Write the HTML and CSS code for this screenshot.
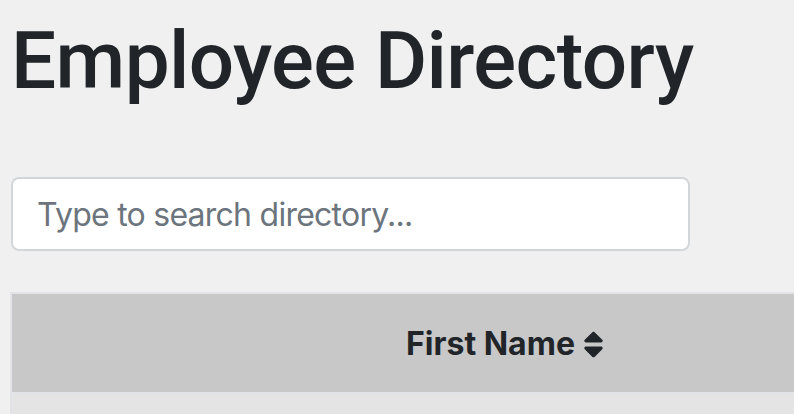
FILE: index.html
```html
<!DOCTYPE html>
<html lang="en">
<head>
<meta charset="utf-8">
<title>Employee Directory</title>
<link rel="stylesheet" href="styles.css">
</head>
<body>
<div class="page">
  <h1 class="title">Employee Directory</h1>
  <input class="search" type="text" placeholder="Type to search directory...">
  <div class="table-wrap">
    <table class="directory">
      <thead>
        <tr>
          <th class="col-image"></th>
          <th class="col-first">First Name <svg class="sort" viewBox="0 0 320 512" width="21" height="33" aria-hidden="true"><path d="M41 288h238c21.4 0 32.1 25.9 17 41L177 448c-9.4 9.4-24.6 9.4-33.9 0L24 329c-15.1-15.1-4.4-41 17-41zm255-105L177 64c-9.4-9.4-24.6-9.4-33.9 0L24 183c-15.1 15.1-4.4 41 17 41h238c21.4 0 32.1-25.9 17-41z"/></svg></th>
          <th class="col-last"></th>
        </tr>
      </thead>
      <tbody>
        <tr>
          <td></td>
          <td></td>
          <td></td>
        </tr>
      </tbody>
    </table>
  </div>
</div>
</body>
</html>
```

FILE: styles.css
```css
html, body {
  margin: 0;
  padding: 0;
  background: #f0f0f0;
  overflow: hidden;
}

body {
  font-family: Inter, "Liberation Sans", Arial, sans-serif;
  color: #212529;
}

.page {
  padding: 13px 0 0 10px;
}

.title {
  margin: 0 0 68px 1px;
  font-family: Roboto, "Liberation Sans", Arial, sans-serif;
  font-size: 80px;
  font-weight: 500;
  line-height: 96px;
  letter-spacing: -0.6px;
}

.search {
  display: block;
  box-sizing: border-box;
  width: 679px;
  height: 74px;
  margin: 0 0 41px 1px;
  padding: 0 24px;
  border: 2px solid #d3d6d9;
  border-radius: 8px;
  background: #fff;
  font-family: Inter, "Liberation Sans", Arial, sans-serif;
  font-size: 32px;
  letter-spacing: -0.75px;
  color: #495057;
  outline: none;
}

.search::placeholder {
  color: #6c757d;
  opacity: 1;
}

.table-wrap {
  width: 1200px;
}

.directory {
  border-collapse: collapse;
  width: 1200px;
  table-layout: fixed;
  border-top: 2px solid #e1e3e6;
  border-left: 2px solid #e1e3e6;
}

.directory thead th {
  height: 100px;
  padding: 0 24px;
  box-sizing: border-box;
  background: #c8c8c8;
  border-bottom: 2px solid #e1e3e6;
  font-size: 32px;
  font-weight: 700;
  text-align: left;
  vertical-align: middle;
  white-space: nowrap;
}

.col-image { width: 371px; }
.col-first { width: 400px; }

.sort {
  display: inline-block;
  vertical-align: -6px;
  fill: #212529;
}

.directory tbody td {
  height: 60px;
  background: #e4e4e4;
}
```
